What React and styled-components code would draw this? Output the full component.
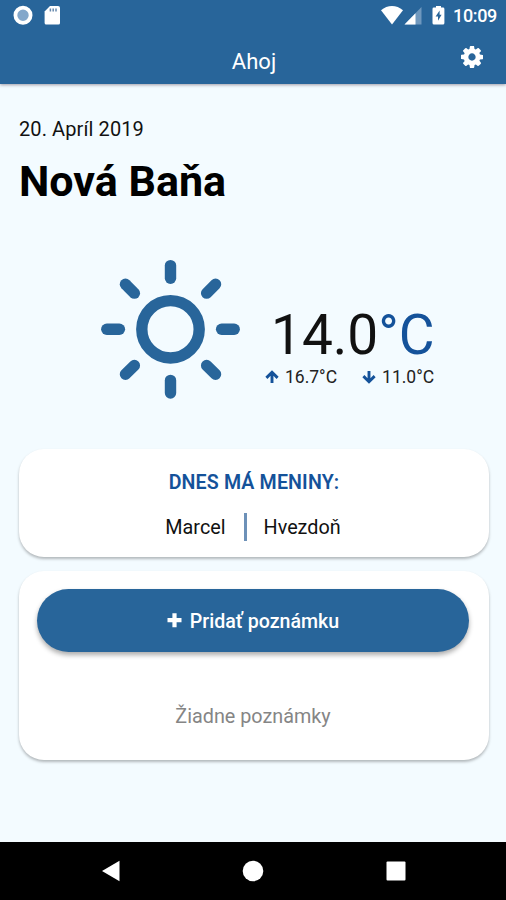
import React from 'react';
import styled, { createGlobalStyle } from 'styled-components';

const GlobalStyle = createGlobalStyle`
  :root {
    --blue: #28659a;
    --blue-text: #14529a;
    --background: #f3fbff;
  }
  * {
    box-sizing: border-box;
    margin: 0;
    padding: 0;
  }
  body {
    font-family: Roboto, 'Noto Sans', sans-serif;
    color: #111;
  }
  svg {
    display: block;
  }
`;

const ScreenStyle = styled.div`
  display: flex;
  flex-direction: column;
  width: 506px;
  height: 900px;
  overflow: hidden;
  background: var(--background);
`;

const HeaderStyle = styled.header`
  height: 84px;
  flex-shrink: 0;
  background: var(--blue);
  color: #fff;
  box-shadow: 0 1px 3px rgba(60, 40, 60, 0.45);
`;

const StatusBar = styled.div`
  display: flex;
  justify-content: space-between;
  height: 34px;
  padding: 5px 9px 0 13px;
  .left,
  .right {
    display: flex;
    align-items: flex-start;
  }
  .left {
    gap: 10px;
  }
  .battery {
    margin-left: 10px;
  }
  .time {
    font-size: 18px;
    font-weight: 500;
    line-height: 22px;
    letter-spacing: -0.35px;
    margin-left: 8px;
  }
`;

const TitleBar = styled.div`
  display: grid;
  grid-template-columns: 1fr auto 1fr;
  height: 50px;
  padding: 12px 23px 0 25px;
  h2 {
    grid-area: 1 / 2;
    padding-top: 1px;
    font-size: 22px;
    font-weight: 400;
    line-height: 30px;
  }
  button {
    grid-area: 1 / 3;
    justify-self: end;
    align-self: start;
    border: 0;
    background: none;
    color: #fff;
  }
`;

const MainStyle = styled.main`
  flex: 1;
  padding: 32px 17px 0 19px;
`;

const DateText = styled.p`
  font-size: 20px;
  line-height: 26px;
  letter-spacing: 0.1px;
`;

const City = styled.h1`
  margin-top: 14px;
  font-size: 43px;
  font-weight: 700;
  line-height: 50px;
  color: #000;
`;

const WeatherStyle = styled.section`
  display: flex;
  height: 243px;
  padding: 53px 0 0 81px;
`;

const Temperature = styled.div`
  margin: 44px 0 0 25px;
`;

const CurrentTemp = styled.div`
  font-size: 55px;
  line-height: 64px;
  margin-left: 6px;
  span {
    color: var(--blue-text);
  }
`;

const Range = styled.div`
  display: flex;
  gap: 25px;
  margin-top: -1px;
`;

const RangeItem = styled.div`
  display: flex;
  align-items: center;
  gap: 6px;
  font-size: 17.5px;
  line-height: 22px;
  color: #222;
  svg {
    color: var(--blue-text);
  }
`;

const Card = styled.section`
  height: ${(props) => props.$height};
  margin-bottom: 14px;
  padding: ${(props) => props.$padding};
  border-radius: 25px;
  background: #fff;
  box-shadow: 0 2px 3px rgba(0, 0, 0, 0.27);
  text-align: center;
`;

const CardTitle = styled.h3`
  font-size: 19.6px;
  font-weight: 600;
  line-height: 24px;
  letter-spacing: 0.15px;
  color: var(--blue-text);
`;

const Names = styled.div`
  display: flex;
  align-items: center;
  justify-content: center;
  margin-top: 18px;
  padding-right: 2px;
  font-size: 19.8px;
  line-height: 28px;
  span {
    padding-top: 1px;
    line-height: 27px;
  }
  span + span {
    margin-left: 18px;
    padding-left: 17px;
    border-left: 3px solid #6d91b8;
  }
`;

const AddButton = styled.button`
  display: flex;
  align-items: center;
  justify-content: center;
  gap: 8px;
  width: 100%;
  height: 63px;
  padding-top: 2px;
  border: 0;
  border-radius: 32px;
  background: var(--blue);
  box-shadow: 0 3px 5px rgba(0, 0, 0, 0.33);
  color: #fff;
  font: 500 19.6px/24px Roboto, sans-serif;
`;

const EmptyText = styled.p`
  margin-top: 51px;
  font-size: 19.8px;
  line-height: 28px;
  color: #858585;
`;

const NavBar = styled.nav`
  display: flex;
  align-items: center;
  justify-content: space-between;
  height: 58px;
  padding: 0 100px 0 101px;
  flex-shrink: 0;
  background: #000;
  color: #fff;
`;

function RecordIcon() {
  return (
    <svg width="20" height="20" viewBox="0 0 20 20">
      <circle cx="10" cy="10.2" r="7.6" fill="#83a7ca" stroke="#fff" strokeWidth="3.8" />
    </svg>
  );
}

function SdCardIcon() {
  return (
    <svg width="18" height="20" viewBox="0 0 18 20">
      <path
        d="M7 1h8a2 2 0 0 1 2 2v15a1.6 1.6 0 0 1-1.6 1.6H3.2A1.6 1.6 0 0 1 1.6 18V6.5z"
        fill="#fff"
      />
      <path d="M7.4 3.6v2.8M10.2 3.6v2.8M13 3.6v2.8" stroke="#6689ad" strokeWidth="1.5" />
    </svg>
  );
}

function WifiIcon() {
  return (
    <svg width="24" height="20" viewBox="0 0 24 20">
      <path d="M1 5.3C7.5-.4 16.5-.4 23 5.3L12 19.5z" fill="#fff" />
    </svg>
  );
}

function SignalIcon() {
  return (
    <svg width="18" height="20" viewBox="0 0 18 20">
      <path d="M17.5 2v17.5H.5z" fill="#6f98be" />
      <path d="M11.5 8.2v11.3H.5z" fill="#fff" />
    </svg>
  );
}

function BatteryIcon() {
  return (
    <svg className="battery" width="13" height="20" viewBox="0 0 13 20">
      <path
        d="M4 1h5v1.6h2A1.4 1.4 0 0 1 12.4 4v14a1.5 1.5 0 0 1-1.5 1.5H2A1.5 1.5 0 0 1 .5 18V4A1.4 1.4 0 0 1 2 2.600h2z"
        fill="#fff"
      />
      <path d="M7.6 5.5L3.6 11.4h2.400v4.400L9.600 9.800H7.600z" fill="#28659a" />
    </svg>
  );
}

function CogIcon() {
  return (
    <svg width="22" height="22" viewBox="0 0 1536 1536" fill="currentColor">
      <path d="M1024 768q0-106-75-181t-181-75-181 75-75 181 75 181 181 75 181-75 75-181zm512-109v222q0 12-8 23t-20 13l-185 28q-19 54-39 91 35 50 107 138 10 12 10 25t-9 23q-27 37-99 108t-94 71q-12 0-26-9l-138-108q-44 23-91 38-16 136-29 186-7 28-36 28h-222q-14 0-24.500-8.500t-11.500-21.500l-28-184q-49-16-90-37l-141 107q-10 9-25 9-14 0-25-11-126-114-165-168-7-10-7-23 0-12 8-23 15-21 51-66.500t54-70.500q-27-50-41-99l-183-27q-13-2-21-12.500t-8-23.500v-222q0-12 8-23t19-13l186-28q14-46 39-92-40-57-107-138-10-12-10-24 0-10 9-23 26-36 98.500-107.500t94.500-71.500q13 0 26 10l138 107q44-23 91-38 16-136 29-186 7-28 36-28h222q14 0 24.500 8.500t11.500 21.500l28 184q49 16 90 37l142-107q9-9 24-9 13 0 25 10 129 119 165 170 7 8 7 22 0 12-8 23-15 21-51 66.500t-54 70.500q26 50 41 98l183 28q13 2 21 12.500t8 23.500z" />
    </svg>
  );
}

function SunIcon() {
  const angles = [0, 45, 90, 135, 180, 225, 270, 315];
  return (
    <svg width="140" height="140" viewBox="-70.500 -70.300 140 140">
      <g fill="none" stroke="#28659a" strokeWidth="11.4" strokeLinecap="round">
        <circle r="28.7" />
        {angles.map((angle) => (
          <path key={angle} d="M0-63.700v12.600" transform={`rotate(${angle})`} />
        ))}
      </g>
    </svg>
  );
}

function ArrowIcon({ down }) {
  return (
    <svg width="14" height="14" viewBox="0 0 14 14">
      <path
        d="M7 13V3M1.400 7.900L7 2.300l5.600 5.600"
        transform={down ? 'rotate(180 7 7)' : undefined}
        fill="none"
        stroke="currentColor"
        strokeWidth="2.9"
      />
    </svg>
  );
}

function PlusIcon() {
  return (
    <svg width="15" height="18" viewBox="0 0 15 18">
      <path d="M7.500.2v14M.5 7.200h14" stroke="#fff" strokeWidth="4.2" />
    </svg>
  );
}

export default function App() {
  return (
    <ScreenStyle>
      <GlobalStyle />
      <HeaderStyle>
        <StatusBar>
          <div className="left">
            <RecordIcon />
            <SdCardIcon />
          </div>
          <div className="right">
            <WifiIcon />
            <SignalIcon />
            <BatteryIcon />
            <span className="time">10:09</span>
          </div>
        </StatusBar>
        <TitleBar>
          <h2>Ahoj</h2>
          <button type="button">
            <CogIcon />
          </button>
        </TitleBar>
      </HeaderStyle>
      <MainStyle>
        <DateText>20. Apríl 2019</DateText>
        <City>Nová Baňa</City>
        <WeatherStyle>
          <SunIcon />
          <Temperature>
            <CurrentTemp>
              14.0<span>°C</span>
            </CurrentTemp>
            <Range>
              <RangeItem>
                <ArrowIcon />
                16.7°C
              </RangeItem>
              <RangeItem>
                <ArrowIcon down />
                11.0°C
              </RangeItem>
            </Range>
          </Temperature>
        </WeatherStyle>
        <Card $height="108px" $padding="22px 0 0">
          <CardTitle>DNES MÁ MENINY:</CardTitle>
          <Names>
            <span>Marcel</span>
            <span>Hvezdoň</span>
          </Names>
        </Card>
        <Card $height="189px" $padding="18px 20px 0 18px">
          <AddButton type="button">
            <PlusIcon />
            Pridať poznámku
          </AddButton>
          <EmptyText>Žiadne poznámky</EmptyText>
        </Card>
      </MainStyle>
      <NavBar>
        <svg width="19" height="22" viewBox="0 0 19 22">
          <path d="M18.500.8v20.400L1 11z" fill="currentColor" />
        </svg>
        <svg width="22" height="22" viewBox="0 0 22 22">
          <circle cx="11" cy="11" r="10.3" fill="currentColor" />
        </svg>
        <svg width="20" height="20" viewBox="0 0 20 20">
          <rect x="0.5" y="0.5" width="19" height="19" rx="1" fill="currentColor" />
        </svg>
      </NavBar>
    </ScreenStyle>
  );
}
